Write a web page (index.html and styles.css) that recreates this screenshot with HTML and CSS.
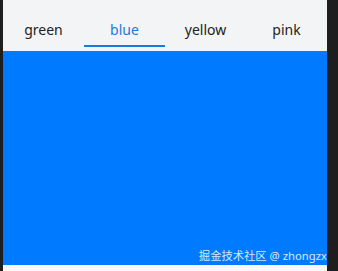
FILE: index.html
```html
<!DOCTYPE html>
<html>
    <head>
        <meta charset="utf-8">
        <title>tabs</title>
        <link rel="stylesheet" href="styles.css">
    </head>
    <body>
        <div class="wrap">
            <div class="tabs">
                <a class="tab" href="#">green</a>
                <a class="tab active" href="#">blue</a>
                <a class="tab" href="#">yellow</a>
                <a class="tab" href="#">pink</a>
            </div>
            <div class="panel">
                <span class="mark">掘金技术社区 @ zhongzx</span>
            </div>
            <div class="foot"></div>
        </div>
    </body>
</html>
```

FILE: styles.css
```css
body{
    margin: 0;
    background: #1e1e1e;
    font-family: "Noto Sans", "Noto Sans CJK SC", sans-serif;
}
a{
    text-decoration: none;
    color: #222;
}
.wrap{
    margin-left: 3px;
    width: 324px;
    height: 271px;
    display: flex;
    flex-direction: column;
    background: #f7f8fa;
}
.tabs{
    display: flex;
    background: #f3f4f6;
    padding-bottom: 4px;
}
.tab{
    flex: 1;
    text-align: center;
    font-size: 14px;
    line-height: 20px;
    padding: 20px 0 5px;
    border-bottom: 2px solid transparent;
}
.tab.active{
    color: #1a7ae0;
    border-bottom-color: #1a7ae0;
}
.panel{
    height: 214px;
    background: #007bff;
    display: flex;
    justify-content: flex-end;
    align-items: flex-end;
    padding: 0 0 1px 0;
    box-sizing: border-box;
}
.mark{
    color: rgba(255, 255, 255, 0.85);
    font-size: 11.3px;
    line-height: 16px;
}
.foot{
    flex: 1;
    background: #f7f8fa;
}
```
